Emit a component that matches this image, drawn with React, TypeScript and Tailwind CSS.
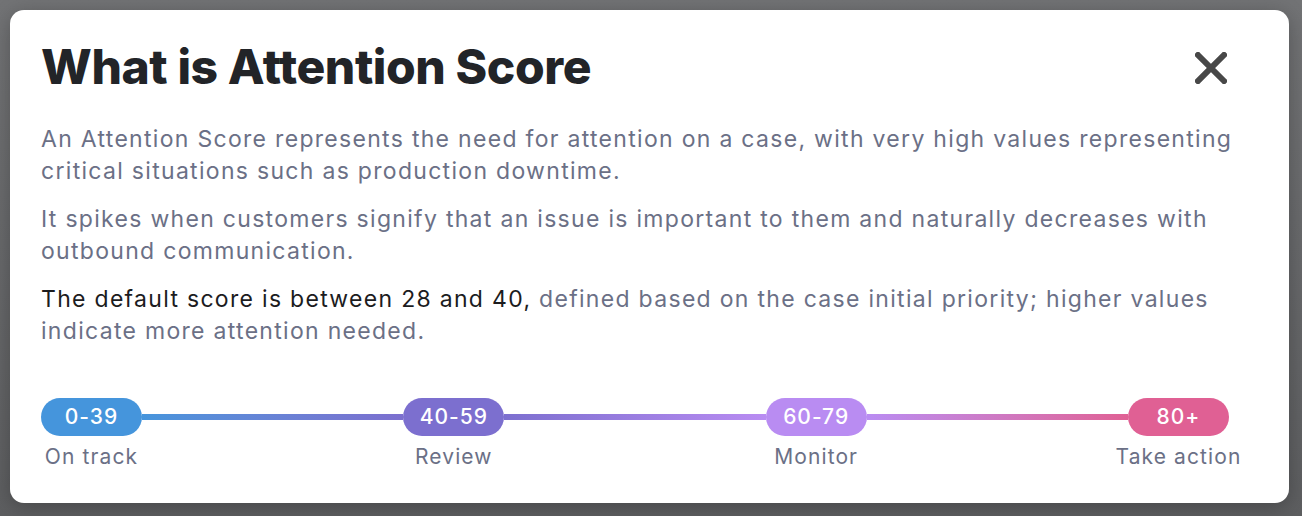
import React from "react";

const font = { fontFamily: "Inter, 'Noto Sans', sans-serif" };

function Stage({ range, label, color }: { range: string; label: string; color: string }) {
  return (
    <div className="flex w-[101px] shrink-0 flex-col items-center">
      <div
        className={`flex h-[38px] w-[101px] items-center justify-center rounded-[19px] text-[21px] font-medium tracking-[1px] text-white ${color}`}
      >
        {range}
      </div>
      <div className="mt-[7px] whitespace-nowrap text-[21px] leading-[28px] tracking-[1.1px] text-[#6b7086]">
        {label}
      </div>
    </div>
  );
}

export default function App() {
  return (
    <div
      className="h-[516px] w-[1302px] overflow-hidden bg-gradient-to-b from-[#727375] to-[#5d5e60] pl-[10px] pt-[10px]"
      style={font}
    >
      <div className="flex h-[493px] w-[1279px] flex-col rounded-[14px] bg-white px-[31px] pt-[28px] shadow-[0_4px_20px_rgba(0,0,0,0.25)]">
        <div className="flex items-start justify-between">
          <h1 className="text-[48px] font-extrabold leading-[58px] tracking-[-0.4px] text-[#222428]">
            What is Attention Score
          </h1>
          <button className="mr-[31px] mt-[14px] flex h-[32px] w-[32px] items-center justify-center">
            <svg width="32" height="32" viewBox="0 0 32 32">
              <path d="M3 3 L29 29 M29 3 L3 29" stroke="#484848" strokeWidth="6" strokeLinecap="square" />
            </svg>
          </button>
        </div>
        <div className="mt-[27px] flex flex-col gap-[16px] whitespace-nowrap text-[23px] leading-[32px] tracking-[1.3px] text-[#6b7086]">
          <p>
            An Attention Score represents the need for attention on a case, with very high values representing
            <br />
            critical situations such as production downtime.
          </p>
          <p>
            It spikes when customers signify that an issue is important to them and naturally decreases with
            <br />
            outbound communication.
          </p>
          <p>
            <span className="text-[#1c1c1e]">The default score is between 28 and 40, </span>
            defined based on the case initial priority; higher values
            <br />
            indicate more attention needed.
          </p>
        </div>
        <div className="mt-[51px] flex w-[1188px] items-start">
          <Stage range="0-39" label="On track" color="bg-[#4595dc]" />
          <div className="mt-[16px] h-[6px] flex-1 bg-gradient-to-r from-[#4595dc] to-[#7c6fcf]" />
          <Stage range="40-59" label="Review" color="bg-[#7c6fcf]" />
          <div className="mt-[16px] h-[6px] flex-1 bg-gradient-to-r from-[#7c6fcf] to-[#b98cf2]" />
          <Stage range="60-79" label="Monitor" color="bg-[#b98cf2]" />
          <div className="mt-[16px] h-[6px] flex-1 bg-gradient-to-r from-[#b98cf2] to-[#e06094]" />
          <Stage range="80+" label="Take action" color="bg-[#e06094]" />
        </div>
      </div>
    </div>
  );
}
